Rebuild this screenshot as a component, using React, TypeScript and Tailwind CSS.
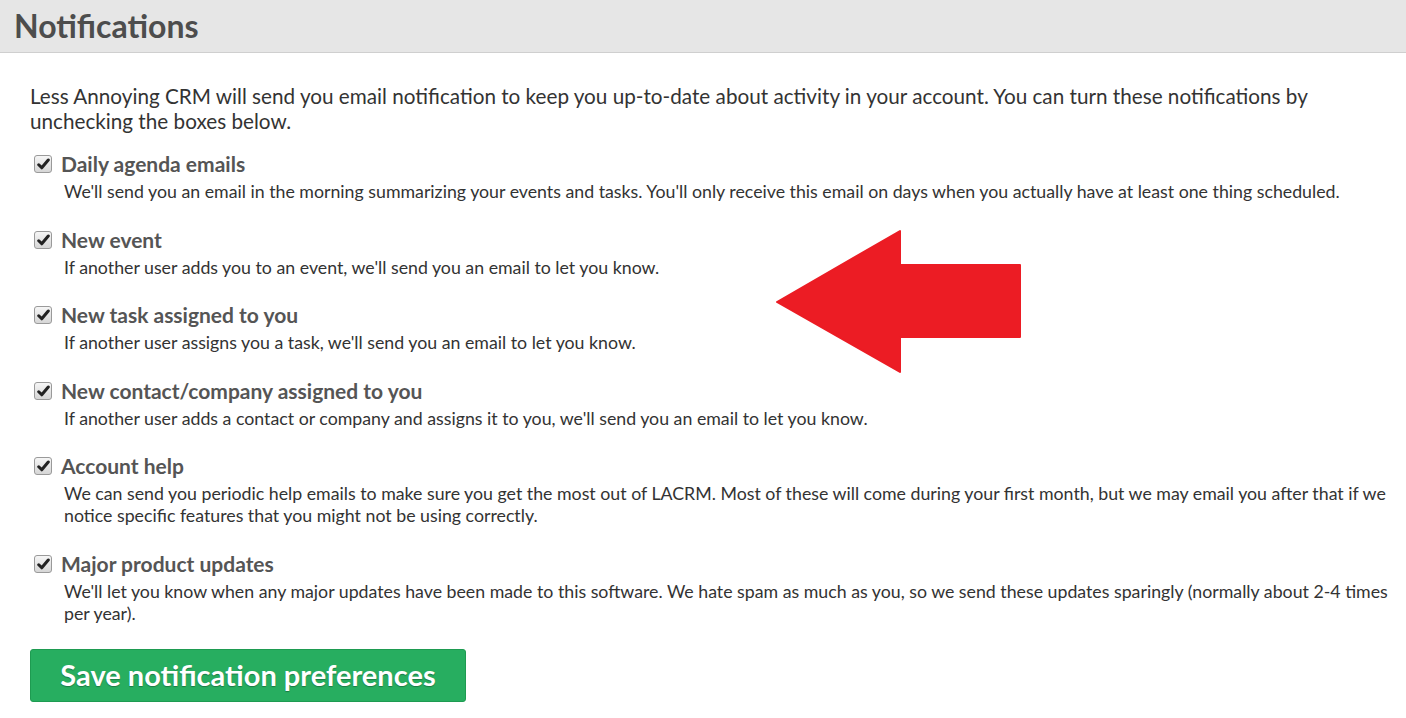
import React from "react";

const items = [
  {
    title: "Daily agenda emails",
    desc: "We'll send you an email in the morning summarizing your events and tasks. You'll only receive this email on days when you actually have at least one thing scheduled.",
  },
  {
    title: "New event",
    desc: "If another user adds you to an event, we'll send you an email to let you know.",
  },
  {
    title: "New task assigned to you",
    desc: "If another user assigns you a task, we'll send you an email to let you know.",
  },
  {
    title: "New contact/company assigned to you",
    desc: "If another user adds a contact or company and assigns it to you, we'll send you an email to let you know.",
  },
  {
    title: "Account help",
    desc: "We can send you periodic help emails to make sure you get the most out of LACRM. Most of these will come during your first month, but we may email you after that if we notice specific features that you might not be using correctly.",
  },
  {
    title: "Major product updates",
    desc: "We'll let you know when any major updates have been made to this software. We hate spam as much as you, so we send these updates sparingly (normally about 2-4 times per year).",
  },
];

function Check() {
  return (
    <span className="mt-[5px] flex h-[18px] w-[18px] shrink-0 items-center justify-center rounded-[3px] border border-[#9a9a9a] bg-gradient-to-b from-[#f6f6f6] to-[#d6d6d6]">
      <svg width="13" height="12" viewBox="0 0 12 11">
        <path d="M1.6 6.2 L4.4 9 L10.4 1.8" fill="none" stroke="#222" strokeWidth="2.8" strokeLinecap="round" strokeLinejoin="round" />
      </svg>
    </span>
  );
}

export default function App() {
  return (
    <div className="relative h-[718px] w-[1406px] overflow-hidden bg-white font-['Lato',sans-serif] text-[#333]">
      <div className="h-[53px] border-b border-[#cfcfcf] bg-[#e6e6e6] pl-[14px] pt-[5px]">
        <h1 className="text-[32px] font-bold leading-[42px] text-[#4d4d4d]">Notifications</h1>
      </div>
      <div className="pl-[30px] pr-[10px] pt-[31px]">
        <p className="text-[20.7px] leading-[25px] text-[#333]">
          Less Annoying CRM will send you email notification to keep you up-to-date about activity in your account. You can turn these notifications by unchecking the boxes below.
        </p>
        <div className="mt-[16px] flex flex-col gap-[23.5px] pl-[4px]">
          {items.map((it) => (
            <div key={it.title} className="flex gap-[9px]">
              <Check />
              <div>
                <div className="text-[21px] font-bold leading-[28px] text-[#555]">{it.title}</div>
                <div className="mt-[2px] pl-[3px] text-[17.75px] leading-[22px] text-[#333]">{it.desc}</div>
              </div>
            </div>
          ))}
        </div>
        <button className="mt-[25px] h-[53px] w-[436px] rounded-[3px] border border-[#1e9b51] bg-[#27ae60] text-[29px] font-bold text-white [text-shadow:0_1px_1px_rgba(0,0,0,0.3)]">
          Save notification preferences
        </button>
      </div>
      <svg className="absolute left-[770px] top-[225px]" width="260" height="155" viewBox="770 225 260 155">
        <polygon
          points="777,302 900,231 900,265 1020,265 1020,337 900,337 900,372"
          fill="#ec1c24"
          stroke="#ec1c24"
          strokeWidth="2"
          strokeLinejoin="round"
        />
      </svg>
    </div>
  );
}
